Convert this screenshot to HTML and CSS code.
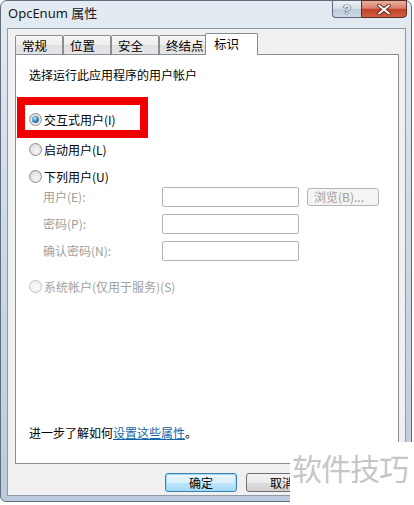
FILE: index.html
```html
<!DOCTYPE html>
<html lang="zh-CN">
<head>
    <meta charset="UTF-8">
    <title>OpcEnum 属性</title>
    <link rel="stylesheet" href="styles.css">
</head>
<body>

    <div class="window">
        <div class="titlebar">
            <span class="title">OpcEnum 属性</span>
            <div class="caption-buttons">
                <span class="cap help">?</span>
                <span class="cap close">
                    <svg width="14" height="11" viewBox="0 0 14 11">
                        <path d="M2 1.5 L12 9.5 M12 1.5 L2 9.5" stroke="#5a1e14" stroke-width="3.6" stroke-linecap="round"/>
                        <path d="M2 1.5 L12 9.5 M12 1.5 L2 9.5" stroke="#fff" stroke-width="2" stroke-linecap="round"/>
                    </svg>
                </span>
            </div>
        </div>

        <div class="client">
            <!-- Tabs -->
            <div class="tabs">
                <span class="tab">常规</span>
                <span class="tab">位置</span>
                <span class="tab">安全</span>
                <span class="tab">终结点</span>
                <span class="tab active">标识</span>
            </div>

            <div class="panel">
                <p class="intro">选择运行此应用程序的用户帐户</p>

                <div class="option first">
                    <span class="radio checked"></span>交互式用户(I)
                </div>
                <div class="option second">
                    <span class="radio"></span>启动用户(L)
                </div>
                <div class="option third">
                    <span class="radio"></span>下列用户(U)
                </div>

                <div class="fields">
                    <span class="field-label">用户(E):</span>
                    <span class="textbox"></span>
                    <span class="browse">浏览(B)...</span>

                    <span class="field-label">密码(P):</span>
                    <span class="textbox"></span>
                    <span></span>

                    <span class="field-label">确认密码(N):</span>
                    <span class="textbox"></span>
                    <span></span>
                </div>

                <div class="option fourth disabled">
                    <span class="radio"></span>系统帐户(仅用于服务)(S)
                </div>

                <p class="more">进一步了解如何<a href="#">设置这些属性</a>。</p>
            </div>

            <!-- Dialog buttons -->
            <div class="footer">
                <button class="btn default">确定</button>
                <button class="btn">取消</button>
                <button class="btn"></button>
            </div>
        </div>
    </div>

    <!-- Annotation + watermark over the screenshot -->
    <div class="highlight"></div>
    <div class="watermark">软件技巧</div>

</body>
</html>
```

FILE: styles.css
```css
body {
    margin: 0;
    position: relative;
    width: 414px;
    height: 505px;
    background-color: #fff;
    font-family: "Noto Sans CJK SC", "Noto Sans", sans-serif;
    font-size: 12px;
    color: #000;
    overflow: hidden;
}

.window {
    box-sizing: border-box;
    width: 412px;
    height: 502px;
    border: 1px solid #5f6d7c;
    border-radius: 7px 7px 6px 6px;
    background: linear-gradient(180deg, #e4ebf2 0%, #cfdbe8 40%, #bccbdc 100%);
    display: flex;
    flex-direction: column;
}

/* Title bar */
.titlebar {
    height: 27px;
    display: flex;
    align-items: flex-start;
}

.title {
    padding-left: 7px;
    line-height: 25px;
    font-family: "Noto Sans", "Noto Sans CJK SC", sans-serif;
    font-size: 13px;
    color: #1a1a1a;
}

.caption-buttons {
    margin-left: auto;
    margin-right: 4px;
    margin-top: -1px;
    display: flex;
}

.cap {
    box-sizing: border-box;
    height: 18px;
    display: flex;
    align-items: center;
    justify-content: center;
}

.help {
    width: 29px;
    border: 1px solid #5b6876;
    border-right: none;
    border-radius: 0 0 0 4px;
    background: linear-gradient(180deg, #eef2f7 0%, #d5dee9 48%, #c0cddb 52%, #ccd8e5 100%);
    color: #fff;
    font-family: "Liberation Sans", sans-serif;
    font-weight: bold;
    font-size: 13px;
    text-shadow: 0 0 1px #333, 0 0 1px #333, 0 0 1px #333;
}

.close {
    width: 46px;
    border: 1px solid #5a2a24;
    border-radius: 0 0 4px 0;
    background: linear-gradient(180deg, #eab0a2 0%, #d9806c 45%, #c2412a 52%, #d0603f 100%);
}

/* Client area */
.client {
    box-sizing: border-box;
    height: 468px;
    margin: 0 5px 0 6px;
    padding: 4px 7px 0 7px;
    border: 1px solid #8d9aa8;
    background-color: #f0f0f0;
}

.tabs {
    display: flex;
    align-items: flex-end;
    height: 21px;
}

.tab {
    box-sizing: border-box;
    width: 48px;
    height: 19px;
    padding-left: 6px;
    border: 1px solid #898c95;
    border-bottom: none;
    border-radius: 2px 2px 0 0;
    background: linear-gradient(180deg, #f6f6f6 0%, #ededed 50%, #e0e0e0 51%, #e6e6e6 100%);
    line-height: 20px;
    font-size: 12.5px;
}

.tab.active {
    position: relative;
    z-index: 1;
    width: 53px;
    height: 22px;
    margin-left: -2px;
    margin-bottom: -1px;
    padding-left: 8px;
    background: #fff;
    line-height: 20px;
}

.panel {
    box-sizing: border-box;
    width: 384px;
    height: 410px;
    padding: 12px 13px 22px 13px;
    border: 1px solid #898c95;
    background-color: #fff;
    display: flex;
    flex-direction: column;
}

.intro {
    margin: 0;
    line-height: 16px;
}

.option {
    display: flex;
    align-items: center;
    gap: 2px;
    height: 16px;
}

.option.first { margin-top: 28px; }
.option.second { margin-top: 14px; }
.option.third { margin-top: 11px; }
.option.fourth { margin-top: 17px; }

.option.disabled {
    color: #a0a0a0;
}

.radio {
    box-sizing: border-box;
    width: 13px;
    height: 13px;
    border: 1px solid #8f8f8f;
    border-radius: 50%;
    background: radial-gradient(circle at 60% 65%, #f6f6f6 0%, #e2e2e2 60%, #cfcfcf 100%);
    display: flex;
    align-items: center;
    justify-content: center;
}

.radio.checked::after {
    content: "";
    width: 7px;
    height: 7px;
    border-radius: 50%;
    background: radial-gradient(circle at 40% 35%, #bfe3fa 0%, #3f8cc8 45%, #17497a 100%);
}

.disabled .radio {
    border-color: #c2c2c2;
    background: radial-gradient(circle at 60% 65%, #fbfbfb 0%, #ededed 100%);
}

.fields {
    display: grid;
    grid-template-columns: 111px 137px 72px;
    grid-auto-rows: 20px;
    column-gap: 8px;
    row-gap: 7px;
    margin-top: 3px;
    margin-left: 14px;
}

.field-label {
    color: #a0a0a0;
    line-height: 20px;
}

.textbox {
    box-sizing: border-box;
    border: 1px solid #b5b5b5;
    border-radius: 2px;
    background-color: #fff;
}

.browse {
    box-sizing: border-box;
    align-self: center;
    height: 18px;
    border: 1px solid #b5b5b5;
    border-radius: 3px;
    background-color: #f4f4f4;
    color: #a0a0a0;
    line-height: 16px;
    padding-left: 6px;
}

.more {
    margin: auto 0 0 0;
    line-height: 16px;
}

.more a {
    color: #1664a8;
}

/* Footer buttons */
.footer {
    display: flex;
    justify-content: flex-end;
    gap: 9px;
    margin-top: 9px;
    width: 384px;
}

.btn {
    box-sizing: border-box;
    width: 72px;
    height: 19px;
    padding: 0;
    border: 1px solid #707070;
    border-radius: 3px;
    background: linear-gradient(180deg, #f2f2f2 0%, #ebebeb 50%, #dddddd 51%, #cfcfcf 100%);
    font-family: "Noto Sans CJK SC", sans-serif;
    font-size: 12px;
    color: #000;
}

.btn.default {
    border-color: #3c7fb1;
    background: linear-gradient(180deg, #eaf6fd 0%, #d9f0fc 50%, #bee6fd 51%, #a7d9f5 100%);
    box-shadow: inset 0 0 0 1px #9fdcf8;
}

/* Red annotation box */
.highlight {
    position: absolute;
    left: 17px;
    top: 97px;
    width: 131px;
    height: 41px;
    box-sizing: border-box;
    border: 8px solid #f00000;
}

.watermark {
    position: absolute;
    left: 290px;
    top: 442px;
    right: 0;
    bottom: 0;
    padding-left: 2px;
    background-color: #fff;
    color: #c6c6c6;
    font-size: 30px;
    line-height: 50px;
    letter-spacing: -1px;
}
```
